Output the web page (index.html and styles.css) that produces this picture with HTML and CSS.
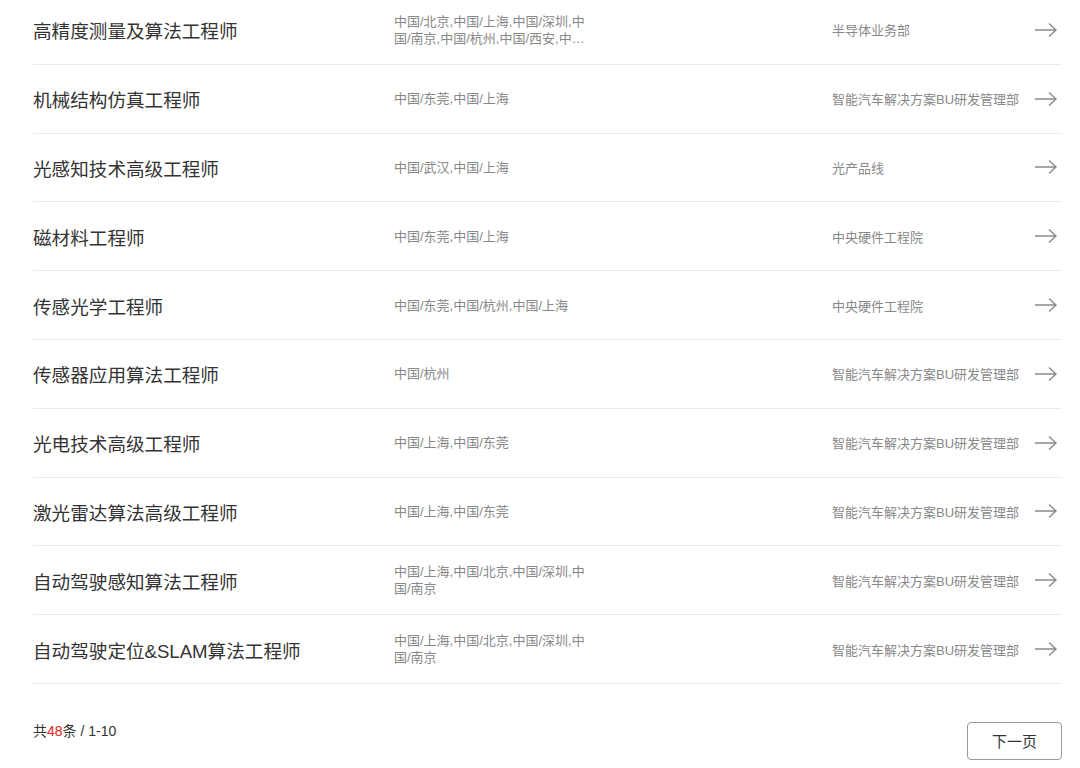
FILE: index.html
```html
<!DOCTYPE html>
<html lang="zh">
<head>
<meta charset="utf-8">
<title>职位列表</title>
<link rel="stylesheet" href="styles.css">
</head>
<body>
<div class="page">
  <ul class="jobs">
    <li class="job"><span class="title">高精度测量及算法工程师</span><span class="loc">中国/北京,中国/上海,中国/深圳,中国/南京,中国/杭州,中国/西安,中国/东莞,中国/武汉</span><span class="dept">半导体业务部</span><span class="arrow"><svg viewBox="0 0 24 16" width="24" height="16"><path d="M1 8H22M15 1.5L22 8L15 14.5" fill="none" stroke="#8a8a8a" stroke-width="1.4"/></svg></span></li>
    <li class="job"><span class="title">机械结构仿真工程师</span><span class="loc">中国/东莞,中国/上海</span><span class="dept">智能汽车解决方案BU研发管理部</span><span class="arrow"><svg viewBox="0 0 24 16" width="24" height="16"><path d="M1 8H22M15 1.5L22 8L15 14.5" fill="none" stroke="#8a8a8a" stroke-width="1.4"/></svg></span></li>
    <li class="job"><span class="title">光感知技术高级工程师</span><span class="loc">中国/武汉,中国/上海</span><span class="dept">光产品线</span><span class="arrow"><svg viewBox="0 0 24 16" width="24" height="16"><path d="M1 8H22M15 1.5L22 8L15 14.5" fill="none" stroke="#8a8a8a" stroke-width="1.4"/></svg></span></li>
    <li class="job"><span class="title">磁材料工程师</span><span class="loc">中国/东莞,中国/上海</span><span class="dept">中央硬件工程院</span><span class="arrow"><svg viewBox="0 0 24 16" width="24" height="16"><path d="M1 8H22M15 1.5L22 8L15 14.5" fill="none" stroke="#8a8a8a" stroke-width="1.4"/></svg></span></li>
    <li class="job"><span class="title">传感光学工程师</span><span class="loc">中国/东莞,中国/杭州,中国/上海</span><span class="dept">中央硬件工程院</span><span class="arrow"><svg viewBox="0 0 24 16" width="24" height="16"><path d="M1 8H22M15 1.5L22 8L15 14.5" fill="none" stroke="#8a8a8a" stroke-width="1.4"/></svg></span></li>
    <li class="job"><span class="title">传感器应用算法工程师</span><span class="loc">中国/杭州</span><span class="dept">智能汽车解决方案BU研发管理部</span><span class="arrow"><svg viewBox="0 0 24 16" width="24" height="16"><path d="M1 8H22M15 1.5L22 8L15 14.5" fill="none" stroke="#8a8a8a" stroke-width="1.4"/></svg></span></li>
    <li class="job"><span class="title">光电技术高级工程师</span><span class="loc">中国/上海,中国/东莞</span><span class="dept">智能汽车解决方案BU研发管理部</span><span class="arrow"><svg viewBox="0 0 24 16" width="24" height="16"><path d="M1 8H22M15 1.5L22 8L15 14.5" fill="none" stroke="#8a8a8a" stroke-width="1.4"/></svg></span></li>
    <li class="job"><span class="title">激光雷达算法高级工程师</span><span class="loc">中国/上海,中国/东莞</span><span class="dept">智能汽车解决方案BU研发管理部</span><span class="arrow"><svg viewBox="0 0 24 16" width="24" height="16"><path d="M1 8H22M15 1.5L22 8L15 14.5" fill="none" stroke="#8a8a8a" stroke-width="1.4"/></svg></span></li>
    <li class="job"><span class="title">自动驾驶感知算法工程师</span><span class="loc">中国/上海,中国/北京,中国/深圳,中国/南京</span><span class="dept">智能汽车解决方案BU研发管理部</span><span class="arrow"><svg viewBox="0 0 24 16" width="24" height="16"><path d="M1 8H22M15 1.5L22 8L15 14.5" fill="none" stroke="#8a8a8a" stroke-width="1.4"/></svg></span></li>
    <li class="job"><span class="title">自动驾驶定位&amp;SLAM算法工程师</span><span class="loc">中国/上海,中国/北京,中国/深圳,中国/南京</span><span class="dept">智能汽车解决方案BU研发管理部</span><span class="arrow"><svg viewBox="0 0 24 16" width="24" height="16"><path d="M1 8H22M15 1.5L22 8L15 14.5" fill="none" stroke="#8a8a8a" stroke-width="1.4"/></svg></span></li>
  </ul>
  <div class="pager">
    <span class="count">共<em>48</em>条 / 1-10</span>
    <button class="next">下一页</button>
  </div>
</div>
</body>
</html>
```
FILE: styles.css
```css
* { box-sizing: border-box; }
html, body { margin: 0; padding: 0; background: #fff; }
body {
  font-family: "Liberation Sans", "Noto Sans CJK SC", sans-serif;
  color: #333;
}
.page {
  padding: 0 18px 0 33px;
}
.jobs {
  list-style: none;
  margin: -4px 0 0;
  padding: 0;
}
.job {
  display: flex;
  align-items: center;
  height: 68.8px;
  border-bottom: 1px solid #ebebeb;
}
.title {
  width: 361px;
  font-size: 18.6px;
  color: #333;
  white-space: nowrap;
}
.loc {
  width: 200px;
  font-size: 13px;
  line-height: 17px;
  color: #888;
  display: -webkit-box;
  -webkit-line-clamp: 2;
  -webkit-box-orient: vertical;
  overflow: hidden;
  word-break: break-all;
}
.dept {
  margin-left: 238px;
  flex: 1;
  font-size: 13px;
  color: #888;
  white-space: nowrap;
}
.arrow {
  display: flex;
  margin-right: 4px;
}
.pager {
  display: flex;
  align-items: flex-start;
  justify-content: space-between;
  padding-top: 38px;
}
.count {
  font-size: 14px;
  line-height: 18px;
  color: #333;
}
.count em {
  font-style: normal;
  color: #e02020;
}
.next {
  width: 95px;
  height: 38px;
  border: 1px solid #999;
  border-radius: 4px;
  background: #fff;
  font-family: inherit;
  font-size: 15px;
  color: #333;
}
```
